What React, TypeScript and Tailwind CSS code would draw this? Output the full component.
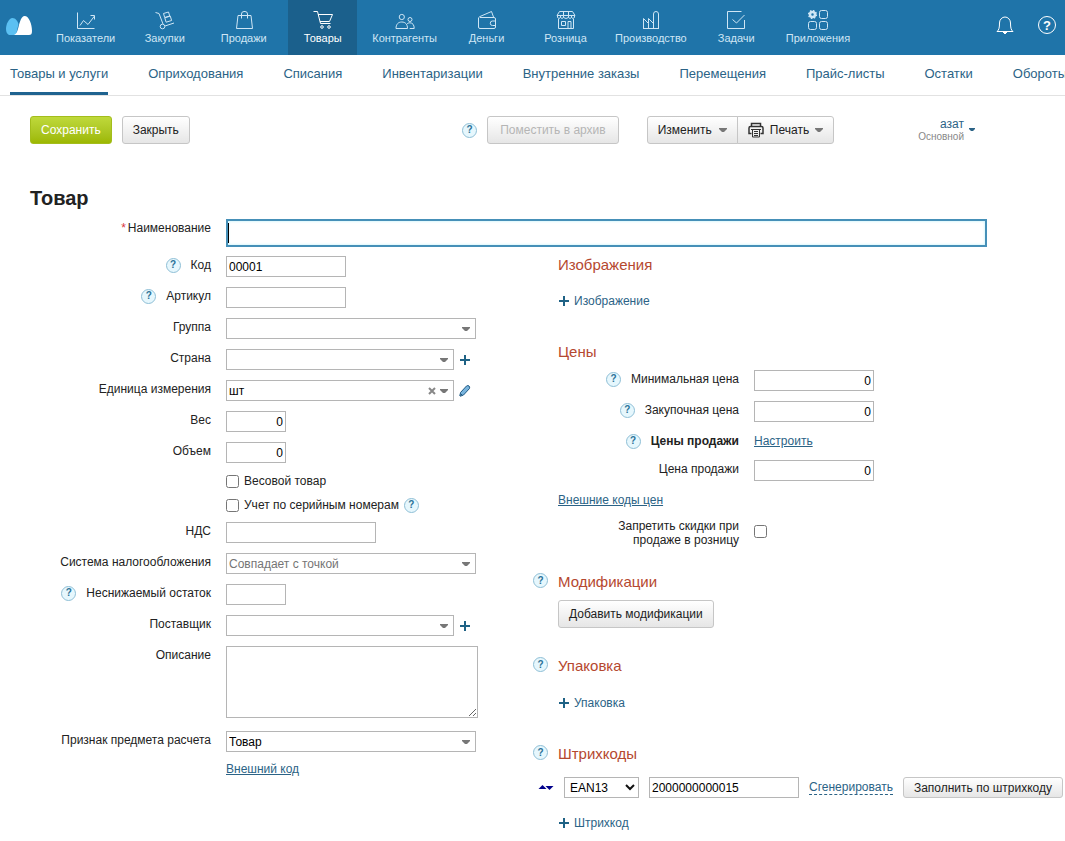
import React from 'react';

interface FieldProps {
    id: string;
    label: string;
    help?: boolean;
    required?: boolean;
    children: React.ReactNode;
}

interface SelectBoxProps {
    id: string;
    value?: string;
    width: string;
    muted?: boolean;
    clearable?: boolean;
}

interface SectionProps {
    title: string;
    help?: boolean;
    className?: string;
    children: React.ReactNode;
}

const inputClass = 'block h-[21px] border border-[#b5b5b5] bg-white px-[2px] text-xs text-black outline-none';
const buttonClass = 'flex items-center justify-center border border-[#c6c6c6] bg-linear-to-b from-white to-[#e6e6e6] text-xs';
const linkClass = 'text-[#2b6386]';

const mainMenu = [
    {
        title: 'Показатели',
        icon: <path d="M1.5 2.5v16h17M4 15.5l3.5-5 4.5 4 6.5-8.5M14.5 5.5h4v4" />,
    },
    {
        title: 'Закупки',
        icon: (
            <>
                <path d="M.5 2.500l3.500 1 4 10.500M10 16l9-3" />
                <circle cx="7.500" cy="16.500" r="2.300" />
                <path d="M8.500 3.500l5-1.500 1.200 4-5 1.500zM9.800 7.800l5.500-1.700 1.300 4.400-5.500 1.700z" />
            </>
        ),
    },
    {
        title: 'Продажи',
        icon: <path d="M4 5.500h13l1.500 13h-16zM7.500 8.500V4a2.500 2.500 0 0 1 2.500-2.500h1A2.500 2.500 0 0 1 13.500 4v4.500" />,
    },
    {
        title: 'Товары',
        icon: (
            <>
                <path d="M.5 1.500h4l3 12h10M5 4.500h14.500l-3 7H7" />
                <circle cx="9" cy="17" r="1.300" />
                <circle cx="16" cy="17" r="1.300" />
            </>
        ),
    },
    {
        title: 'Контрагенты',
        icon: (
            <>
                <circle cx="6.800" cy="7" r="2.600" />
                <circle cx="15" cy="9.500" r="2" />
                <path d="M1 18.500c0-4 2-6.500 5.800-6.500s5.700 2.500 5.700 6.500zM11.500 14.500c1-1.200 2-1.700 3.500-1.700 2.700 0 4.200 2.200 4.200 5.700h-4.500" />
            </>
        ),
    },
    {
        title: 'Деньги',
        icon: (
            <>
                <path d="M1.500 8.500c0-1 .5-1.500 1.500-2l11.500-5 2 5.500M3 7.500h14a1.500 1.500 0 0 1 1.500 1.500v8a1.500 1.500 0 0 1-1.500 1.500H3A1.500 1.500 0 0 1 1.500 17V8" />
                <path d="M18.500 11h-3a2 2 0 0 0 0 4.500h3" />
            </>
        ),
    },
    {
        title: 'Розница',
        icon: (
            <>
                <path d="M3.500 1.500h13l2.500 4H1zM1.500 5.500v2q1.500 2 3 0 1.500 2 3 0 2.500 2 5 0 1.500 2 3 0 1.500 2 3 0v-2M4.500 5.500v2M7.500 2v5.500M12.500 2v5.500M15.500 5.500v2" />
                <path d="M2.500 9v9.500h15V9M5.500 11.500h4v4h-4zM12 18.500v-7h3v7" />
            </>
        ),
    },
    {
        title: 'Производство',
        icon: <path d="M2.500 18.500v-10l5 5v-5l5 5M7.500 13.500v5M12.500 18.500V4a2.500 2.500 0 0 1 5 0v14.500zM2 18.500h16" />,
    },
    {
        title: 'Задачи',
        icon: <path d="M15.500 1.500h-14v17h17V10M6.500 9.500l4 3.500 8-8" />,
    },
    {
        title: 'Приложения',
        icon: (
            <>
                <circle cx="4.500" cy="4.500" r="2.500" strokeWidth="2.500" />
                <circle cx="4.500" cy="4.500" r="3.800" strokeWidth="1.600" strokeDasharray="1.490" />
                <rect x="11.500" y=".5" width="8" height="8" rx="2" />
                <rect x=".5" y="11.500" width="8" height="8" rx="2" />
                <rect x="11.500" y="11.500" width="8" height="8" rx="2" />
            </>
        ),
    },
];

const subMenu = [
    'Товары и услуги',
    'Оприходования',
    'Списания',
    'Инвентаризации',
    'Внутренние заказы',
    'Перемещения',
    'Прайс-листы',
    'Остатки',
    'Обороты',
];

const Help = () => (
    <button
        type="button"
        aria-label="Справка"
        className="flex size-[15px] shrink-0 items-center justify-center rounded-full border border-[#8fbfd6] bg-[#e6f7fd] text-[10px] leading-none font-bold text-[#2b7298]"
    >
        ?
    </button>
);

const Caret = ({ className = '' }: { className?: string }) => (
    <svg className={className} width="8" height="4" viewBox="0 0 8 4" fill="#777">
        <path d="M0 0h8v1L5 4H3L0 1z" />
    </svg>
);

const Plus = () => (
    <svg width="12" height="12" viewBox="0 0 12 12" stroke="#1f6285" strokeWidth="2">
        <path d="M6 1v10M1 6h10" />
    </svg>
);

const AddButton = ({ title }: { title: string }) => (
    <button type="button" className={`flex h-[18px] items-center gap-1 ${linkClass}`}>
        <Plus />
        {title}
    </button>
);

const Field = ({ id, label, help, required, children }: FieldProps) => (
    <div className="flex items-start gap-[15px]">
        <div className="flex w-[181px] shrink-0 items-center justify-end leading-[18px]">
            {help && <Help />}
            {required && <span className="mr-[2px] text-[#d9363e]">*</span>}
            <label htmlFor={id} className={help ? 'ml-[10px]' : ''}>{label}</label>
        </div>
        {children}
    </div>
);

const SelectBox = ({ id, value = '', width, muted, clearable }: SelectBoxProps) => (
    <div className={`relative ${width}`}>
        <select
            id={id}
            className={`block h-[21px] w-full appearance-none border border-[#b5b5b5] bg-white pl-[2px] text-xs outline-none ${muted ? 'text-[#757575]' : 'text-black'}`}
        >
            <option>{value}</option>
        </select>
        {clearable && (
            <button type="button" aria-label="Очистить" className="absolute top-[7px] right-[18px]">
                <svg width="8" height="8" viewBox="0 0 8 8" stroke="#888" strokeWidth="2">
                    <path d="M1 1l6 6M7 1L1 7" />
                </svg>
            </button>
        )}
        <Caret className="pointer-events-none absolute top-[9px] right-[6px]" />
    </div>
);

const Section = ({ title, help, className = '', children }: SectionProps) => (
    <section className={`flex ${className}`}>
        <div className="w-[25px] shrink-0">{help && <Help />}</div>
        <div className="min-w-0 flex-1">
            <h2 className="text-[15px] leading-[18px] text-[#b5482f]">{title}</h2>
            {children}
        </div>
    </section>
);

const Header = () => (
    <header className="flex h-[55px] bg-[#1f74a9] text-[11px] text-[#cfe6f5]">
        <a href="#" aria-label="Главная" className="ml-[6px] flex w-10 shrink-0 pt-4">
            <svg width="27" height="19" viewBox="0 0 27 19">
                <path fill="#5bc0f2" d="M3 19C1 18 0 16 0 13 0 8 3 2 6.500 2c3 0 5 3 6 6L10 19z" />
                <path fill="#fff" d="M8 19c2.500-1 3.500-4 4.500-8C14 5 15.500 0 18.500 0 23 0 26 8 26 15c0 3-1 4-3 4z" />
            </svg>
        </a>
        <nav className="flex">
            {mainMenu.map((item) => (
                <a key={item.title} href="#" className="flex min-w-[79px] justify-center px-[5px]">
                    <span
                        className={`flex min-w-[69px] flex-col items-center px-[5px] pt-[10px] ${item.title === 'Товары' ? 'bg-[#1b608c] text-white' : ''}`}
                    >
                        <svg width="20" height="20" viewBox="0 0 20 20" fill="none" stroke="currentColor">
                            {item.icon}
                        </svg>
                        <span className="mt-px leading-[14px]">{item.title}</span>
                    </span>
                </a>
            ))}
        </nav>
        <div className="mr-[9px] ml-auto flex items-center gap-6 pb-[5px] text-white">
            <button type="button" aria-label="Уведомления">
                <svg width="18" height="20" viewBox="0 0 18 20" fill="none" stroke="currentColor">
                    <path d="M1 16.500c2-1.500 2.500-4 2.500-8.500a5.500 6 0 0 1 11 0c0 4.500.5 7 2.500 8.500z" />
                    <path fill="currentColor" d="M7 17h4l-2 2z" />
                </svg>
            </button>
            <button
                type="button"
                aria-label="Помощь"
                className="flex size-[18px] items-center justify-center rounded-full border border-white text-[13px] leading-none font-bold"
            >
                ?
            </button>
        </div>
    </header>
);

const App: React.FC = () => {
    return (
        <div className="overflow-hidden bg-white pb-2 font-['Liberation_Sans',Arial,sans-serif] text-xs text-[#222]">
            <Header />

            <nav className="flex h-[41px] gap-10 overflow-hidden border-b border-[#e2e2e2] pl-[10px] text-[13px] whitespace-nowrap">
                {subMenu.map((title, i) => (
                    <a
                        key={title}
                        href="#"
                        className={`h-10 pt-[10px] leading-[18px] ${linkClass} ${i === 0 ? 'border-b-3 border-[#1f6390]' : ''}`}
                    >
                        {title}
                    </a>
                ))}
            </nav>

            <div className="mt-5 flex h-7 items-stretch pr-[89px] pl-[30px]">
                <button
                    type="button"
                    className="rounded-[3px] border border-[#a3bd1c] bg-linear-to-b from-[#bfd93a] to-[#9db800] px-[10px] text-white"
                >
                    Сохранить
                </button>
                <button type="button" className={`ml-[10px] rounded-[3px] px-[10px] ${buttonClass}`}>
                    Закрыть
                </button>
                <div className="ml-auto flex items-center gap-[10px]">
                    <Help />
                    <button type="button" disabled className={`h-7 rounded-[3px] px-3 ${buttonClass} text-[#b5b5b5]`}>
                        Поместить в архив
                    </button>
                </div>
                <button type="button" className={`ml-7 gap-[7px] rounded-l-[3px] px-[10px] ${buttonClass}`}>
                    Изменить
                    <Caret />
                </button>
                <button type="button" className={`-ml-px gap-[6px] rounded-r-[3px] px-[10px] ${buttonClass}`}>
                    <svg width="16" height="16" viewBox="0 0 16 16" fill="none" stroke="#333">
                        <path strokeWidth="1.500" d="M3.500 4V1.500h9V4M3.500 11.500H1V6q0-1.500 1.500-1.500h11Q15 4.500 15 6v5.500h-2.500" />
                        <path d="M4.500 7.500h7v7.500h-7zM3 7.500h10M6 9.500h4M6 11.500h4M6 13.500h4" />
                    </svg>
                    Печать
                    <Caret />
                </button>
                <button type="button" className="ml-[84px] flex items-center gap-1">
                    <span className="flex flex-col items-end">
                        <span className={`leading-[14px] ${linkClass}`}>азат</span>
                        <span className="text-[10px] leading-3 text-[#888]">Основной</span>
                    </span>
                    <svg width="8" height="4" viewBox="0 0 8 4" fill="#2b6386">
                        <path d="M1 0h6v1L5 3H3L1 1z" />
                    </svg>
                </button>
            </div>

            <main className="pl-[30px]">
                <h1 className="mt-[42px] text-xl leading-6 font-bold">Товар</h1>

                <div className="mt-[9px] mr-[78px]">
                    <Field id="name" label="Наименование" required>
                        <div className="relative flex-1">
                            <input
                                id="name"
                                type="text"
                                className="block h-7 w-full border-2 border-[#4690b8] bg-white px-1 shadow-[inset_0_0_3px_#b9f0fa] outline-none"
                            />
                            <span className="absolute top-1 left-[2px] h-5 w-px bg-black" />
                        </div>
                    </Field>
                </div>

                <div className="mt-[9px] flex gap-[55px]">
                    <form className="flex w-[448px] shrink-0 flex-col gap-[10px]">
                        <Field id="code" label="Код" help>
                            <input id="code" type="text" defaultValue="00001" className={`w-[120px] ${inputClass}`} />
                        </Field>
                        <Field id="article" label="Артикул" help>
                            <input id="article" type="text" className={`w-[120px] ${inputClass}`} />
                        </Field>
                        <Field id="group" label="Группа">
                            <SelectBox id="group" width="w-[250px]" />
                        </Field>
                        <Field id="country" label="Страна">
                            <div className="flex items-center gap-[5px]">
                                <SelectBox id="country" width="w-[228px]" />
                                <button type="button" aria-label="Добавить страну"><Plus /></button>
                            </div>
                        </Field>
                        <Field id="unit" label="Единица измерения">
                            <div className="flex items-center gap-[5px]">
                                <SelectBox id="unit" value="шт" width="w-[228px]" clearable />
                                <button type="button" aria-label="Изменить единицу">
                                    <svg width="12" height="12" viewBox="0 0 12 12" fill="#79b4dd" stroke="#1f5b85">
                                        <path d="M1 11l.5-3.500 6-6.500q1.500-1 2.500 0t.5 2.500l-6 6.500z" />
                                        <path fill="#fff" d="M1 11l.5-2.500 2 2z" />
                                    </svg>
                                </button>
                            </div>
                        </Field>
                        <Field id="weight" label="Вес">
                            <input id="weight" type="text" defaultValue="0" className={`w-[60px] text-right ${inputClass}`} />
                        </Field>
                        <Field id="volume" label="Объем">
                            <input id="volume" type="text" defaultValue="0" className={`w-[60px] text-right ${inputClass}`} />
                        </Field>
                        <div className="-mb-px ml-[196px] flex flex-col gap-2">
                            <label className="flex h-4 items-center gap-[5px]">
                                <input type="checkbox" className="size-[13px]" />
                                Весовой товар
                            </label>
                            <div className="flex h-4 items-center gap-[5px]">
                                <input id="serial" type="checkbox" className="size-[13px]" />
                                <label htmlFor="serial">Учет по серийным номерам</label>
                                <Help />
                            </div>
                        </div>
                        <Field id="vat" label="НДС">
                            <input id="vat" type="text" className={`w-[150px] ${inputClass}`} />
                        </Field>
                        <Field id="tax" label="Система налогообложения">
                            <SelectBox id="tax" value="Совпадает с точкой" width="w-[250px]" muted />
                        </Field>
                        <Field id="minimum" label="Неснижаемый остаток" help>
                            <input id="minimum" type="text" className={`w-[60px] ${inputClass}`} />
                        </Field>
                        <Field id="supplier" label="Поставщик">
                            <div className="flex items-center gap-[5px]">
                                <SelectBox id="supplier" width="w-[228px]" />
                                <button type="button" aria-label="Добавить поставщика"><Plus /></button>
                            </div>
                        </Field>
                        <Field id="description" label="Описание">
                            <textarea id="description" className="mb-[3px] block h-[72px] w-[252px] border border-[#b5b5b5] outline-none" />
                        </Field>
                        <Field id="subject" label="Признак предмета расчета">
                            <SelectBox id="subject" value="Товар" width="w-[250px]" />
                        </Field>
                        <a href="#" className={`ml-[196px] self-start leading-[14px] underline ${linkClass}`}>Внешний код</a>
                    </form>

                    <div className="min-w-0 flex-1">
                        <Section title="Изображения">
                            <div className="mt-[18px]">
                                <AddButton title="Изображение" />
                            </div>
                        </Section>

                        <Section title="Цены" className="mt-[33px]">
                            <div className="mt-[9px] flex flex-col gap-[10px]">
                                <Field id="minPrice" label="Минимальная цена" help>
                                    <input id="minPrice" type="text" defaultValue="0" className={`w-[120px] text-right ${inputClass}`} />
                                </Field>
                                <Field id="buyPrice" label="Закупочная цена" help>
                                    <input id="buyPrice" type="text" defaultValue="0" className={`w-[120px] text-right ${inputClass}`} />
                                </Field>
                                <div className="flex items-center gap-[15px] leading-[18px]">
                                    <div className="flex w-[181px] items-center justify-end gap-[10px]">
                                        <Help />
                                        <b>Цены продажи</b>
                                    </div>
                                    <a href="#" className={`underline ${linkClass}`}>Настроить</a>
                                </div>
                                <Field id="salePrice" label="Цена продажи">
                                    <input id="salePrice" type="text" defaultValue="0" className={`w-[120px] text-right ${inputClass}`} />
                                </Field>
                                <a href="#" className={`self-start leading-[18px] underline ${linkClass}`}>Внешние коды цен</a>
                                <div className="flex items-start gap-[15px]">
                                    <label htmlFor="noDiscount" className="w-[181px] pl-[50px] text-right leading-[14px]">
                                        Запретить скидки при продаже в розницу
                                    </label>
                                    <input id="noDiscount" type="checkbox" className="mt-[6px] size-[13px]" />
                                </div>
                            </div>
                        </Section>

                        <Section title="Модификации" help className="mt-[26px]">
                            <button type="button" className={`mt-[9px] h-7 rounded-[3px] px-[10px] ${buttonClass}`}>
                                Добавить модификации
                            </button>
                        </Section>

                        <Section title="Упаковка" help className="mt-[29px]">
                            <div className="mt-[19px]">
                                <AddButton title="Упаковка" />
                            </div>
                        </Section>

                        <Section title="Штрихкоды" help className="mt-[33px]">
                            <div className="mt-[14px] -ml-5 flex items-center gap-[10px] whitespace-nowrap">
                                <button type="button" aria-label="Переместить" className="w-4 shrink-0">
                                    <svg width="16" height="6" viewBox="0 0 16 6" fill="#00008b">
                                        <path d="M4.500 0L8.500 4H.500zM7.500 1h8l-4 4z" />
                                    </svg>
                                </button>
                                <div className="relative w-[75px] shrink-0">
                                    <select aria-label="Тип штрихкода" className="block h-[21px] w-full appearance-none border border-[#b5b5b5] bg-white pl-[5px] text-xs text-black">
                                        <option>EAN13</option>
                                    </select>
                                    <svg className="pointer-events-none absolute top-[7px] right-1" width="10" height="7" viewBox="0 0 10 7" fill="none" stroke="#111" strokeWidth="2">
                                        <path d="M1 1l4 4 4-4" />
                                    </svg>
                                </div>
                                <input aria-label="Штрихкод" type="text" defaultValue="2000000000015" className={`w-[150px] shrink-0 ${inputClass}`} />
                                <button type="button" className={`border-b border-dashed border-[#2b6386] leading-[14px] ${linkClass}`}>
                                    Сгенерировать
                                </button>
                                <button type="button" className={`h-[21px] rounded-[3px] px-[10px] ${buttonClass}`}>
                                    Заполнить по штрихкоду
                                </button>
                            </div>
                            <div className="mt-4">
                                <AddButton title="Штрихкод" />
                            </div>
                        </Section>
                    </div>
                </div>
            </main>
        </div>
    );
};

export default App;
